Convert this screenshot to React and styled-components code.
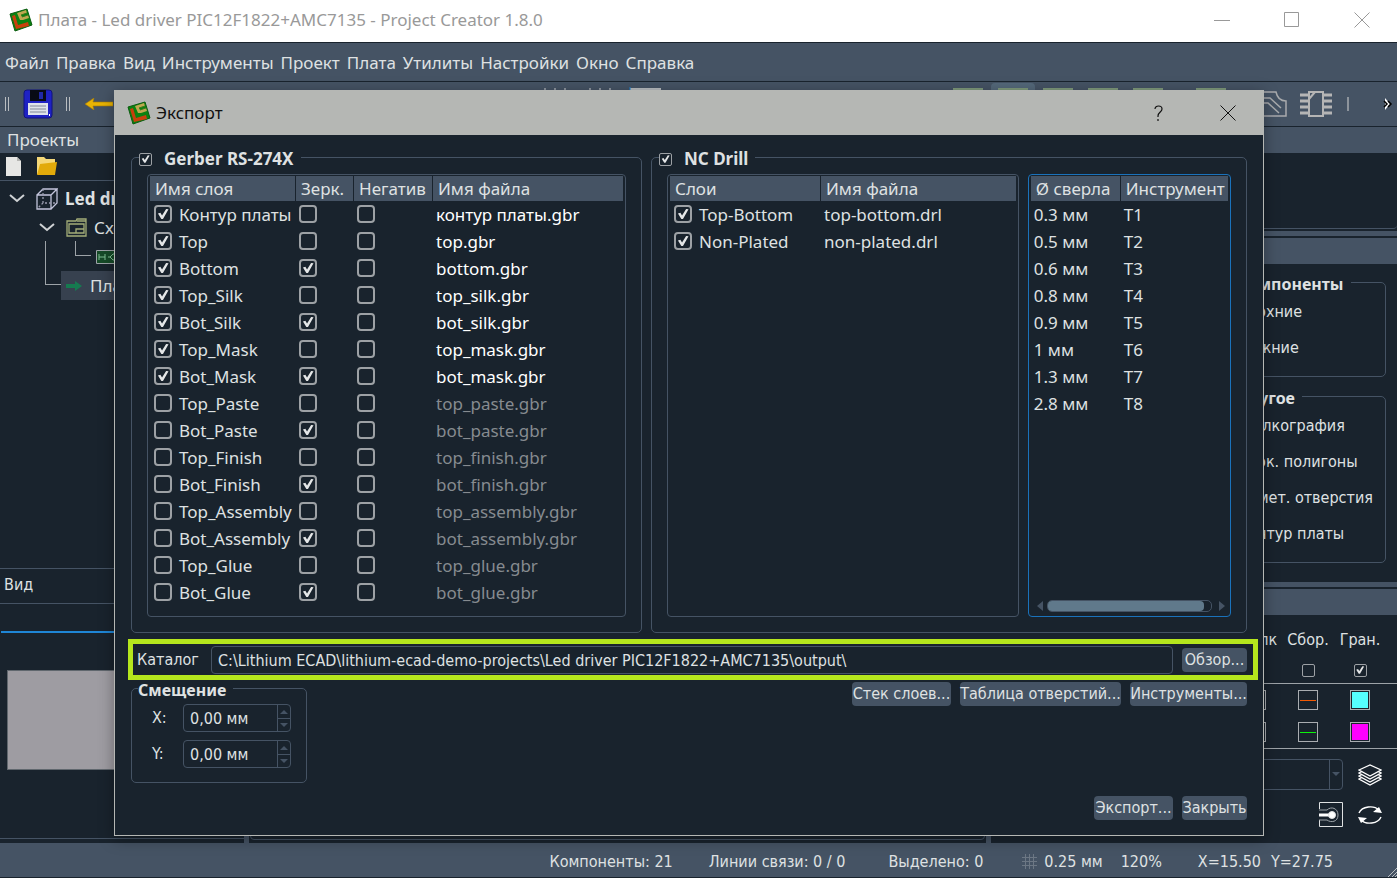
import React from 'react';
import styled, { createGlobalStyle, css } from 'styled-components';

const uiFont = "'Noto Sans', 'Open Sans', sans-serif";
const dialogFont = "'DejaVu Sans Condensed', 'DejaVu Sans', sans-serif";

const GlobalStyle = createGlobalStyle`
  * {
    box-sizing: border-box;
  }
  body {
    margin: 0;
    background: #19232d;
    color: #dfe1e2;
    font: 17px/24px ${uiFont};
    overflow: hidden;
  }
  button, input, select {
    font: inherit;
    color: inherit;
    margin: 0;
  }
`;

const Window = styled.div`
  position: relative;
  display: flex;
  flex-direction: column;
  height: 100vh;
`;

const TitleBar = styled.header`
  display: flex;
  align-items: center;
  flex: none;
  height: 42px;
  padding: 0 0 2px 9px;
  background: #fff;
  color: #999;
`;

const Title = styled.h1`
  flex: 1;
  margin: 0 0 0 5px;
  font-size: 17px;
  font-weight: 400;
  white-space: nowrap;
`;

const CaptionButton = styled.button`
  display: grid;
  place-items: center;
  width: 70px;
  height: 100%;
  padding: 0;
  border: 0;
  background: none;
`;

const MenuBar = styled.nav`
  display: flex;
  align-items: center;
  flex: none;
  height: 40px;
  padding: 1px 0 0 2px;
  background: #455364;
  border-top: 1px solid #19232d;
  border-bottom: 1px solid #19232d;
`;

const MenuItem = styled.button`
  padding: 0 4px 0 3px;
  border: 0;
  background: none;
  white-space: nowrap;
`;

const ToolBar = styled.div`
  display: flex;
  align-items: center;
  gap: 1px;
  flex: none;
  height: 45px;
  padding-left: 5px;
  background: #455364;
  border-bottom: 1px solid #19232d;
`;

const Handle = styled.span`
  width: 4px;
  height: 14px;
  border: solid #b9bdc1;
  border-width: 0 1px;
`;

const ToolButton = styled.button`
  display: grid;
  place-items: center;
  flex: none;
  width: ${(p) => (p.$wide ? '55px' : '44px')};
  height: 43px;
  padding: 0;
  border: 0;
  border-radius: 4px;
  background: ${(p) => (p.$active ? '#54687a' : 'none')};
`;

const ToolGroup = styled.div`
  display: flex;
  align-items: center;
  gap: 1px;
  margin-left: ${(p) => p.$offset};
`;

const ToolSpace = styled.span`
  display: grid;
  place-items: center;
  width: ${(p) => (p.$narrow ? '14px' : '17px')};
  &::after {
    content: '';
    width: 2px;
    height: 14px;
    background: #8d949c;
  }
`;

const MoreButton = styled.button`
  width: 18px;
  margin-left: 22px;
  padding: 0;
  border: 0;
  background: none;
`;

const Workspace = styled.div`
  display: flex;
  flex: 1;
  min-height: 0;
`;

const Splitter = styled.div`
  flex: none;
  width: 5px;
  background: #455364;
`;

const LeftDock = styled.aside`
  display: flex;
  flex-direction: column;
  flex: none;
  width: 244px;
  padding-bottom: 4px;
`;

const Canvas = styled.main`
  flex: 1;
  margin: 0 1px 3px;
  border: 1px solid #455364;
  border-radius: 4px;
`;

const RightDock = styled.aside`
  display: flex;
  flex-direction: column;
  flex: none;
  width: 406px;
`;

const DockTitle = styled.div`
  flex: none;
  height: 26px;
  padding-left: 7px;
  background: #455364;
  line-height: 26px;
`;

const DockTools = styled.div`
  display: flex;
  align-items: center;
  gap: 15px;
  flex: none;
  height: 28px;
  padding-left: 6px;
  border-bottom: 1px solid #455364;
`;

const FlatButton = styled.button`
  display: grid;
  place-items: center;
  padding: 0;
  border: 0;
  background: none;
`;

const Tree = styled.ul`
  flex: 1;
  margin: 0;
  padding: 3px 0 0;
  list-style: none;
  border-bottom: 1px solid #455364;
`;

const TreeRow = styled.li`
  display: flex;
  align-items: center;
  gap: 7px;
  height: 29px;
  margin-left: ${(p) => p.$indent}px;
  padding-left: ${(p) => (p.$selected ? '5px' : '0')};
  font-weight: ${(p) => (p.$top ? 700 : 400)};
  background: ${(p) => (p.$selected ? '#37414f' : 'none')};
  white-space: nowrap;
`;

const Branch = styled.span`
  position: absolute;
  left: ${(p) => p.$x}px;
  top: 241px;
  width: 16px;
  height: ${(p) => p.$length}px;
  border: solid #9da3a8;
  border-width: 0 0 1px 1px;
`;

const ViewTitle = styled.div`
  height: 35px;
  padding-left: 4px;
  font: 16px/32px ${dialogFont};
  border-bottom: 1px solid #455364;
`;

const ViewPane = styled.div`
  height: 235px;
  padding: 27px 0 0 1px;
  border-bottom: 1px solid #455364;
`;

const ViewTab = styled.div`
  height: 39px;
  border-top: 2px solid #1f86d6;
`;

const Preview = styled.div`
  height: 100px;
  margin: 0 6px;
  background: #9e9ca2;
  border: 1px solid #60676e;
`;

const EmptyPane = styled.div`
  flex: none;
  height: 76px;
  border-bottom: 1px solid #455364;
  border-radius: 0 0 4px 4px;
`;

const DockSplit = styled.div`
  flex: none;
  height: 9px;
  border: solid #19232d;
  border-width: 2px 0;
  background: #455364;
`;

const Filters = styled.div`
  display: flex;
  flex-direction: column;
  align-items: flex-end;
  gap: 6px;
  height: 316px;
  padding: 5px 11px 0;
  font: 16px/20px ${dialogFont};
`;

const Group = styled.fieldset`
  min-width: 0;
  margin: 0;
  border: 1px solid #455364;
  border-radius: 5px;
`;

const FilterGroup = styled(Group)`
  width: 156px;
  padding: 6px 14px 1px 7px;
`;

const Legend = styled.legend`
  margin-left: -${(p) => p.$pull || 0}px;
  padding: 4px 7px 0 0;
  font: bold ${(p) => (p.$large ? '17px' : '16px')}/22px ${uiFont};
  white-space: nowrap;
  label {
    display: flex;
    align-items: center;
    gap: 12px;
  }
`;

const FilterLabel = styled.div`
  height: 36px;
  line-height: 22px;
  white-space: nowrap;
  &:last-child {
    height: 38px;
  }
`;

const LayerTable = styled.table`
  margin-left: auto;
  margin-right: 11px;
  border-spacing: 0;
  table-layout: fixed;
  width: 156px;
  font: 16px/20px ${dialogFont};
  text-align: center;
  th {
    padding: 8px 0 0;
    height: 41px;
    font-weight: 400;
    white-space: nowrap;
  }
  td {
    height: ${(p) => (p.$compact ? '27px' : '32px')};
    padding: 0;
  }
`;

const LayerRule = styled.div`
  flex: none;
  height: 1px;
  background: #9da3a8;
`;

const Swatch = styled.button`
  display: inline-grid;
  place-items: center;
  width: 20px;
  height: 20px;
  padding: 0;
  border: 1px solid #a9adb1;
  background: #19232d;
  vertical-align: middle;
  &::after {
    content: '';
    width: 16px;
    height: ${(p) => (p.$line ? '1px' : '16px')};
    background: ${(p) => p.$color};
  }
`;

const LayerTools = styled.div`
  display: grid;
  grid-template-columns: 1fr 24px;
  align-items: center;
  justify-items: center;
  column-gap: 15px;
  row-gap: 12px;
  padding: 10px 15px 0;
  > :nth-child(odd) {
    justify-self: end;
  }
  select {
    width: 130px;
    height: 31px;
    border: 1px solid #455364;
    border-radius: 4px;
    background: #19232d;
    appearance: none;
  }
`;

const SelectWrap = styled.div`
  position: relative;
  &::after {
    content: '';
    position: absolute;
    right: 3px;
    top: 13px;
    border: solid transparent;
    border-width: 4px 4px 0;
    border-top-color: #455364;
  }
  &::before {
    content: '';
    position: absolute;
    right: 13px;
    top: 0;
    height: 31px;
    border-left: 1px solid #455364;
  }
`;

const StatusBar = styled.footer`
  position: relative;
  display: flex;
  align-items: center;
  justify-content: flex-end;
  flex: none;
  height: 35px;
  padding: 3px 64px 0 0;
  background: #455364;
  border-bottom: 1px solid #19232d;
  font: 16px/20px ${dialogFont};
  white-space: nowrap;
  svg.grip {
    position: absolute;
    right: 0;
    bottom: 0;
  }
`;

const Status = styled.span`
  display: flex;
  align-items: center;
  gap: 7px;
  margin-left: ${(p) => p.$gap}px;
`;

const Dialog = styled.section`
  position: absolute;
  inset: 90px 133px 42px 114px;
  display: flex;
  flex-direction: column;
  background: #19232d;
  border: 1px solid #b5b7b4;
  box-shadow: 0 3px 14px rgba(0, 0, 0, 0.35);
`;

const DialogBar = styled.header`
  display: flex;
  align-items: center;
  flex: none;
  height: 44px;
  padding-left: 12px;
  background: #b5b7b4;
  color: #111;
  h2 {
    flex: 1;
    margin: 0 0 0 5px;
    font-size: 17px;
    font-weight: 400;
  }
`;

const DialogBody = styled.form`
  display: flex;
  flex-direction: column;
  flex: 1;
  min-height: 0;
  padding: 9px 16px 15px;
  font: 16px/22px ${dialogFont};
`;

const Groups = styled.div`
  display: grid;
  grid-template-columns: minmax(0, 511fr) minmax(0, 596fr);
  gap: 9px;
  flex: 1;
  min-height: 0;
`;

const TableGroup = styled(Group)`
  display: flex;
  gap: 9px;
  padding: 4px 15px 15px;
`;

const Frame = styled.div`
  display: flex;
  flex-direction: column;
  justify-content: space-between;
  flex: ${(p) => p.$grow || 1} 1 0;
  min-width: 0;
  padding: 1px 2px;
  border: 1px solid ${(p) => (p.$focus ? '#1a72bb' : '#455364')};
  border-radius: 4px;
`;

const Check = styled.input.attrs({ type: 'checkbox' })`
  appearance: none;
  display: inline-grid;
  place-items: center;
  flex: none;
  width: 18px;
  height: 18px;
  border: 2px solid #9da1a5;
  border-radius: 4px;
  vertical-align: middle;
  ${(p) =>
    p.$small &&
    css`
      width: 13px;
      height: 13px;
      border-width: 1px;
      border-radius: 2px;
    `}
  &:checked::after {
    content: '';
    width: ${(p) => (p.$small ? '9px' : '12px')};
    height: ${(p) => (p.$small ? '9px' : '12px')};
    background: #e4e6e7;
    clip-path: polygon(8% 46%, 28% 40%, 42% 62%, 76% 8%, 96% 10%, 50% 92%, 36% 92%);
  }
`;

const Table = styled.table`
  width: 100%;
  border-spacing: 0;
  table-layout: fixed;
  font: 17px/24px ${uiFont};
  th {
    height: 26px;
    padding: 0 0 0 5px;
    text-align: left;
    font-weight: 400;
    background: #455364;
    border-right: 1px solid #19232d;
    border-bottom: 1px solid #19232d;
    white-space: nowrap;
  }
  th:last-child {
    border-right: 0;
  }
  td {
    height: 27px;
    padding: 0 0 1px 3px;
    white-space: nowrap;
  }
  td > ${Check} {
    margin-top: 2px;
    vertical-align: top;
  }
  label {
    display: flex;
    align-items: center;
    gap: 7px;
    padding-left: 1px;
  }
  label > ${Check} {
    margin-bottom: 2px;
  }
`;

const FileCell = styled.td`
  color: ${(p) => (p.$off ? '#868b90' : p.$bright ? '#fff' : '#dfe1e2')};
`;

const ScrollBar = styled.div`
  display: flex;
  align-items: center;
  gap: 4px;
  padding: 0 3px 3px 6px;
`;

const ScrollArrow = styled.span`
  border: solid transparent;
  border-width: 5px 0;
  ${(p) =>
    p.$left
      ? 'border-right: 6px solid #455364;'
      : 'border-left: 6px solid #455364; margin-left: 3px;'}
`;

const Track = styled.div`
  flex: 1;
  height: 12px;
  padding-right: 7px;
  border: 1px solid #455364;
  border-radius: 5px;
  &::after {
    content: '';
    display: block;
    height: 10px;
    border-radius: 4px;
    background: #60798b;
  }
`;

const PathRow = styled.div`
  display: flex;
  align-items: center;
  gap: 9px;
  height: 41px;
  margin: 6px -11px 0 -3px;
  padding: 0 6px 0 4px;
  border: 5px solid #b5e61d;
  label {
    width: 65px;
  }
`;

const PathInput = styled.input`
  flex: 1;
  min-width: 0;
  height: 28px;
  padding: 1px 6px 0;
  border: 1px solid #455364;
  border-radius: 4px;
  background: none;
`;

const Button = styled.button`
  height: 24px;
  padding: 0;
  border: 0;
  border-radius: 4px;
  background: #455364;
  line-height: 24px;
  min-width: ${(p) => p.$min || 65}px;
  white-space: nowrap;
`;

const LowerRow = styled.div`
  display: flex;
  align-items: flex-start;
  justify-content: space-between;
  margin-top: -5px;
`;

const Actions = styled.div`
  display: flex;
  justify-content: flex-end;
  gap: 9px;
  margin-top: ${(p) => p.$top}px;
`;

const OffsetGroup = styled(Group)`
  display: grid;
  grid-template-columns: 31px 108px;
  gap: 8px 0;
  align-items: center;
  padding: 3px 15px 14px 20px;
`;

const Spin = styled.div`
  display: grid;
  grid-template-columns: 1fr 13px;
  grid-template-rows: 13px 13px;
  border: 1px solid #455364;
  border-radius: 4px;
  input {
    grid-row: 1 / 3;
    min-width: 0;
    padding: 1px 6px 0;
    border: 0;
    background: none;
  }
  button {
    display: grid;
    place-items: center;
    padding: 0;
    border: 0;
    border-left: 1px solid #455364;
    background: none;
  }
  button:last-child {
    border-top: 1px solid #455364;
  }
`;

const layers = [
  ['Контур платы', true, false],
  ['Top', true, false],
  ['Bottom', true, true],
  ['Top_Silk', true, false],
  ['Bot_Silk', true, true],
  ['Top_Mask', true, false],
  ['Bot_Mask', true, true],
  ['Top_Paste', false, false],
  ['Bot_Paste', false, true],
  ['Top_Finish', false, false],
  ['Bot_Finish', false, true],
  ['Top_Assembly', false, false],
  ['Bot_Assembly', false, true],
  ['Top_Glue', false, false],
  ['Bot_Glue', false, true],
];

const drills = ['0.3', '0.5', '0.6', '0.8', '0.9', '1', '1.3', '2.8'];

const menu = [
  'Файл', 'Правка', 'Вид', 'Инструменты', 'Проект', 'Плата',
  'Утилиты', 'Настройки', 'Окно', 'Справка',
];

const Logo = () => (
  <svg width='24' height='24' viewBox='0 0 24 24' aria-hidden='true'>
    <path d='M1 6 18 1l5 16L6 23z' fill='#0a8210' stroke='#0a5c0e' strokeLinejoin='round' />
    <path d='m3 8 3-1 3 10 10-3 1 4-13 3z' fill='#c8400c' />
    <path d='M8 5l9-3 1 3-6 2 1 2 6-2 1 3-6 2h-3z' fill='#c0a850' />
    <path d='m12 7 6-2m-5 4 6-2' stroke='#3d7a1c' />
  </svg>
);

const CloseIcon = () => (
  <svg width='16' height='16' viewBox='0 0 16 16' aria-hidden='true'>
    <path d='m.5.5 15 15m0-15-15 15' stroke='currentColor' fill='none' />
  </svg>
);

const SaveIcon = () => (
  <svg width='30' height='30' viewBox='0 0 30 30' aria-hidden='true'>
    <rect x='1' y='1' width='28' height='28' rx='3' fill='#1f22c4' stroke='#11137c' />
    <path d='M7 1h16v11H7z' fill='#080b16' />
    <path d='M16 3h4v7h-4z' fill='#2029a8' />
    <path d='M5 14h20v12H5z' fill='#dfe3ea' />
    <path d='M7 17h16M7 20h16M7 23h16' stroke='#808798' />
    <path d='M26 25h1v2h-1z' fill='#fff' />
  </svg>
);

const BackIcon = () => (
  <svg width='28' height='12' viewBox='0 0 28 12' aria-hidden='true'>
    <path d='M0 6 9 0l-1 4h20v4H8l1 4z' fill='#e9b404' stroke='#a87b06' strokeWidth='.6' />
  </svg>
);

const LayerToolIcon = () => (
  <svg width='30' height='32' viewBox='0 0 30 32' aria-hidden='true'>
    <path d='M1 1h28v30H1z' fill='none' stroke='#7f9a7c' strokeWidth='2' />
  </svg>
);

const TicksIcon = () => (
  <svg width='30' height='32' viewBox='0 0 30 32' aria-hidden='true'>
    <path d='M5 0v31M15 0v31M25 0v31' stroke='#a5abb1' strokeWidth='1.5' />
  </svg>
);

const SheetToolIcon = () => (
  <svg width='32' height='34' viewBox='0 0 32 34' fill='none' aria-hidden='true'>
    <path d='M2 2h29v31H2z' stroke='#b9bdc1' strokeWidth='2' />
    <path d='M1 0v34' stroke='#1f86d6' />
  </svg>
);

const CopperIcon = () => (
  <svg width='32' height='26' viewBox='0 0 32 26' fill='none' stroke='#a9abad' strokeWidth='1.5' aria-hidden='true'>
    <path d='M1 1h20c1 5 4 9 10 9v15H1z' />
    <path d='M1 7h14l11 10M1 12h12l11 10' />
  </svg>
);

const ChipIcon = () => (
  <svg width='32' height='26' viewBox='0 0 32 26' fill='none' stroke='#b5b5b5' aria-hidden='true'>
    <path d='M9 1h14v24H9zM9 8l6-7' strokeWidth='2' />
    <path d='M0 4h8M0 10h8M0 16h8M0 22h8M24 4h8M24 10h8M24 16h8M24 22h8' strokeWidth='3' />
  </svg>
);

const Chevron = styled((props) => (
  <svg width='16' height='10' viewBox='0 0 16 10' aria-hidden='true' {...props}>
    <path d='m1 1 7 6 7-6' fill='none' stroke='#cfd2d4' strokeWidth='2' />
  </svg>
))`
  margin-right: 4px;
`;

const CubeIcon = () => (
  <svg width='22' height='22' viewBox='0 0 22 22' fill='none' stroke='#c3c5dc' strokeWidth='1.3' aria-hidden='true'>
    <path d='M1 7h14v14H1zM1 7l6-6h14l-6 6m6-6v14l-6 6' />
    <path d='M7 1v14h14M7 15l-6 6' strokeDasharray='2 2' stroke='#9a9cae' />
  </svg>
);

const SchemeIcon = () => (
  <svg width='21' height='19' viewBox='0 0 21 19' fill='none' stroke='#a3ad78' strokeWidth='1.3' aria-hidden='true'>
    <path d='M1 3h9l1-2h9v17H1z' />
    <path d='M3 6h15v9H3zM10 15v-4h8M11 3h9' />
  </svg>
);

const SheetIcon = () => (
  <svg width='24' height='14' viewBox='0 0 24 14' aria-hidden='true'>
    <path d='M.5.5h23v13H.5z' fill='#164a28' stroke='#9da3a8' />
    <path d='M3 4v6m0-3h6m0-3v6m3-3h2l3-3h5m-8 3 3 3h5' fill='none' stroke='#7fbf93' />
  </svg>
);

const Spinner = ({ id, label, value }) => (
  <>
    <label htmlFor={id}>{label}</label>
    <Spin>
      <input id={id} defaultValue={value} />
      <button type='button' aria-label='Увеличить'>
        <svg width='8' height='4'><path d='m0 4 4-4 4 4z' fill='#455364' /></svg>
      </button>
      <button type='button' aria-label='Уменьшить'>
        <svg width='8' height='4'><path d='m0 0 4 4 4-4z' fill='#455364' /></svg>
      </button>
    </Spin>
  </>
);

const ExportDialog = () => (
  <Dialog role='dialog' aria-label='Экспорт'>
    <DialogBar>
      <Logo />
      <h2>Экспорт</h2>
      <CaptionButton aria-label='Справка'>
        <svg width='9' height='16' viewBox='0 0 9 16' fill='none' stroke='currentColor' strokeWidth='1.2'>
          <path d='M1 4c0-4 7-4 7 0 0 3-4 3-4 7v1m0 2v2' />
        </svg>
      </CaptionButton>
      <CaptionButton aria-label='Закрыть'>
        <CloseIcon />
      </CaptionButton>
    </DialogBar>
    <DialogBody onSubmit={(e) => e.preventDefault()}>
      <Groups>
        <TableGroup>
          <Legend $large $pull={8}>
            <label>
              <Check $small defaultChecked />
              Gerber RS-274X
            </label>
          </Legend>
          <Frame>
            <Table>
              <colgroup>
                <col width='146' />
                <col width='58' />
                <col width='79' />
                <col />
              </colgroup>
              <thead>
                <tr>
                  <th>Имя слоя</th>
                  <th>Зерк.</th>
                  <th>Негатив</th>
                  <th>Имя файла</th>
                </tr>
              </thead>
              <tbody>
                {layers.map(([name, on, mirror]) => (
                  <tr key={name}>
                    <td>
                      <label>
                        <Check defaultChecked={on} />
                        {name}
                      </label>
                    </td>
                    <td>
                      <Check defaultChecked={mirror} aria-label={`Зерк. ${name}`} />
                    </td>
                    <td>
                      <Check aria-label={`Негатив ${name}`} />
                    </td>
                    <FileCell $off={!on} $bright>
                      {name.toLowerCase()}.gbr
                    </FileCell>
                  </tr>
                ))}
              </tbody>
            </Table>
          </Frame>
        </TableGroup>
        <TableGroup>
          <Legend $large $pull={8}>
            <label>
              <Check $small defaultChecked />
              NC Drill
            </label>
          </Legend>
          <Frame $grow={354}>
            <Table>
              <colgroup>
                <col width='151' />
                <col />
              </colgroup>
              <thead>
                <tr>
                  <th>Слои</th>
                  <th>Имя файла</th>
                </tr>
              </thead>
              <tbody>
                {['Top-Bottom', 'Non-Plated'].map((name) => (
                  <tr key={name}>
                    <td>
                      <label>
                        <Check defaultChecked />
                        {name}
                      </label>
                    </td>
                    <FileCell>{name.toLowerCase()}.drl</FileCell>
                  </tr>
                ))}
              </tbody>
            </Table>
          </Frame>
          <Frame $grow={202} $focus>
            <Table>
              <colgroup>
                <col width='90' />
                <col />
              </colgroup>
              <thead>
                <tr>
                  <th>Ø сверла</th>
                  <th>Инструмент</th>
                </tr>
              </thead>
              <tbody>
                {drills.map((size, i) => (
                  <tr key={size}>
                    <td>{size} мм</td>
                    <td>T{i + 1}</td>
                  </tr>
                ))}
              </tbody>
            </Table>
            <ScrollBar>
              <ScrollArrow $left />
              <Track />
              <ScrollArrow />
            </ScrollBar>
          </Frame>
        </TableGroup>
      </Groups>
      <PathRow>
        <label htmlFor='path'>Каталог</label>
        <PathInput
          id='path'
          defaultValue='C:\Lithium ECAD\lithium-ecad-demo-projects\Led driver PIC12F1822+AMC7135\output\'
        />
        <Button type='button'>Обзор...</Button>
      </PathRow>
      <LowerRow>
        <OffsetGroup>
          <Legend $pull={14}>Смещение</Legend>
          <Spinner id='offset-x' label='X:' value='0,00 мм' />
          <Spinner id='offset-y' label='Y:' value='0,00 мм' />
        </OffsetGroup>
        <Actions $top={7}>
          <Button type='button' $min={99}>Стек слоев...</Button>
          <Button type='button' $min={161}>Таблица отверстий...</Button>
          <Button type='button' $min={117}>Инструменты...</Button>
        </Actions>
      </LowerRow>
      <Actions $top={13}>
        <Button $min={79}>Экспорт...</Button>
        <Button type='button'>Закрыть</Button>
      </Actions>
    </DialogBody>
  </Dialog>
);

const App = () => {
  return (
    <Window>
      <GlobalStyle />
      <TitleBar>
        <Logo />
        <Title>Плата - Led driver PIC12F1822+AMC7135 - Project Creator 1.8.0</Title>
        <CaptionButton aria-label='Свернуть'>
          <svg width='16' height='16'><path d='M0 8.5h16' stroke='#999' /></svg>
        </CaptionButton>
        <CaptionButton aria-label='Развернуть'>
          <svg width='16' height='16'><path d='M.5.5h14v14H.5z' stroke='#999' fill='none' /></svg>
        </CaptionButton>
        <CaptionButton aria-label='Закрыть окно'>
          <CloseIcon />
        </CaptionButton>
      </TitleBar>
      <MenuBar>
        {menu.map((item) => (
          <MenuItem key={item}>{item}</MenuItem>
        ))}
      </MenuBar>
      <ToolBar>
        <Handle />
        <ToolButton $wide aria-label='Сохранить'><SaveIcon /></ToolButton>
        <Handle />
        <ToolButton $wide aria-label='Назад'><BackIcon /></ToolButton>
        <ToolGroup $offset='406px'>
          <ToolButton aria-label='Сетка'><TicksIcon /></ToolButton>
          <ToolButton aria-label='Шаг сетки'><TicksIcon /></ToolButton>
          <ToolButton aria-label='Лист'><SheetToolIcon /></ToolButton>
        </ToolGroup>
        <ToolGroup $offset='auto'>
          <ToolButton aria-label='Слой 1'><LayerToolIcon /></ToolButton>
          <ToolButton $active aria-label='Слой 2'><LayerToolIcon /></ToolButton>
          <ToolButton aria-label='Слой 3'><LayerToolIcon /></ToolButton>
          <ToolButton aria-label='Слой 4'><LayerToolIcon /></ToolButton>
          <ToolButton aria-label='Слой 5'><LayerToolIcon /></ToolButton>
          <ToolSpace />
          <ToolButton aria-label='Слой 6'><LayerToolIcon /></ToolButton>
          <ToolSpace $narrow />
          <ToolButton aria-label='Полигон'><CopperIcon /></ToolButton>
          <ToolButton aria-label='Компонент'><ChipIcon /></ToolButton>
          <ToolSpace />
          <MoreButton aria-label='Ещё'>
            <svg width='10' height='12' viewBox='0 0 10 12' fill='none'>
              <path d='M2 0v12l5-6z' fill='#fff' />
              <path d='m1 3 3 3-3 3m4-6 3 3-3 3' stroke='#000' strokeWidth='1.5' />
            </svg>
          </MoreButton>
        </ToolGroup>
      </ToolBar>
      <Workspace>
        <LeftDock>
          <DockTitle>Проекты</DockTitle>
          <DockTools>
            <FlatButton aria-label='Новый'>
              <svg width='16' height='19' viewBox='0 0 16 19'>
                <path d='M0 0h11l4 4v15H0z' fill='#e6e6e4' />
                <path d='m11 0 4 4h-4z' fill='#b5b5b2' />
              </svg>
            </FlatButton>
            <FlatButton aria-label='Открыть'>
              <svg width='20' height='19' viewBox='0 0 20 19'>
                <path d='M0 0h7l2 2h9v15H0z' fill='#f5d878' />
                <path d='M3 7 20 5l-2 13H0z' fill='#e2aa0a' />
              </svg>
            </FlatButton>
          </DockTools>
          <Tree>
            <TreeRow $top $indent={9}>
              <Chevron />
              <CubeIcon />
              Led driver
            </TreeRow>
            <TreeRow $indent={39}>
              <Chevron />
              <SchemeIcon />
              Схема
            </TreeRow>
            <TreeRow $indent={96}>
              <SheetIcon />
              Лист 1
            </TreeRow>
            <TreeRow $selected $indent={61}>
              <svg width='17' height='12' viewBox='0 0 17 12' aria-hidden='true'>
                <path d='M0 4h9V1l7 5-7 5V8H0z' fill='#167a50' />
              </svg>
              Плата
            </TreeRow>
          </Tree>
          <Branch $x={45} $length={44} />
          <Branch $x={75} $length={15} />
          <ViewTitle>Вид</ViewTitle>
          <ViewPane>
            <ViewTab />
            <Preview />
          </ViewPane>
        </LeftDock>
        <Splitter />
        <Canvas />
        <Splitter />
        <RightDock>
          <DockTitle />
          <EmptyPane />
          <DockSplit />
          <DockTitle />
          <Filters>
            <FilterGroup>
              <Legend $pull={1}>Компоненты</Legend>
              <FilterLabel>Верхние</FilterLabel>
              <FilterLabel>Нижние</FilterLabel>
            </FilterGroup>
            <FilterGroup>
              <Legend $pull={1}>Другое</Legend>
              <FilterLabel>Шелкография</FilterLabel>
              <FilterLabel>Блок. полигоны</FilterLabel>
              <FilterLabel>Немет. отверстия</FilterLabel>
              <FilterLabel>Контур платы</FilterLabel>
            </FilterGroup>
          </Filters>
          <DockSplit />
          <DockTitle />
          <LayerTable $compact>
            <thead>
              <tr>
                <th>Шелк</th>
                <th>Сбор.</th>
                <th>Гран.</th>
              </tr>
            </thead>
            <tbody>
              <tr>
                <td><Check $small aria-label='Шелк' /></td>
                <td><Check $small aria-label='Сбор.' /></td>
                <td><Check $small defaultChecked aria-label='Гран.' /></td>
              </tr>
            </tbody>
          </LayerTable>
          <LayerRule />
          <LayerTable>
            <tbody>
              <tr>
                <td><Swatch $line $color='#dfe1e2' aria-label='Шелк верх' /></td>
                <td><Swatch $line $color='#f25a05' aria-label='Сбор. верх' /></td>
                <td><Swatch $color='#55ffff' aria-label='Гран. верх' /></td>
              </tr>
              <tr>
                <td><Swatch $line $color='#dfe1e2' aria-label='Шелк низ' /></td>
                <td><Swatch $line $color='#0cf20c' aria-label='Сбор. низ' /></td>
                <td><Swatch $color='#ff00ff' aria-label='Гран. низ' /></td>
              </tr>
            </tbody>
          </LayerTable>
          <LayerRule />
          <LayerTools>
            <SelectWrap>
              <select aria-label='Слой' />
            </SelectWrap>
            <FlatButton aria-label='Слои'>
              <svg width='24' height='22' viewBox='0 0 24 22' fill='#19232d' stroke='#fff' strokeWidth='1.3'>
                <path d='m1 15 11-6 11 6-11 6z' />
                <path d='m1 12 11-6 11 6-11 6z' />
                <path d='m1 9 11-6 11 6-11 6z' />
                <path d='m1 6 11-5 11 5-11 6z' />
              </svg>
            </FlatButton>
            <FlatButton aria-label='Площадка'>
              <svg width='24' height='25' viewBox='0 0 24 25' fill='none' stroke='#dfe1e2'>
                <path d='M.5 7V.5h23v24H.5V18' />
                <path d='M0 8h8c4-4 11-2 11 5s-7 8-11 5H0' stroke='#9da3a8' />
                <path d='M0 13h12' strokeWidth='3' stroke='#fff' />
                <circle cx='13' cy='13' r='3.5' fill='#fff' />
              </svg>
            </FlatButton>
            <FlatButton aria-label='Поменять'>
              <svg width='24' height='18' viewBox='0 0 24 18' fill='none' stroke='#fff' strokeWidth='1.4'>
                <path d='M1 7C4 0 16-1 21 4M23 11c-3 7-15 8-20 3' />
                <path d='m24 7-9-1 6-5zM0 11l9 1-6 5z' fill='#fff' stroke='none' />
              </svg>
            </FlatButton>
          </LayerTools>
        </RightDock>
      </Workspace>
      <StatusBar>
        <Status>Компоненты: 21</Status>
        <Status $gap={36}>Линии связи: 0 / 0</Status>
        <Status $gap={43}>Выделено: 0</Status>
        <Status $gap={39}>
          <svg width='15' height='15' viewBox='0 0 15 15' stroke='#6c7784' aria-hidden='true'>
            <path d='M3.5 0v15M7.5 0v15M11.5 0v15M0 3.500h15M0 7.500h15M0 11.500h15' />
          </svg>
          0.25 мм
        </Status>
        <Status $gap={18}>120%</Status>
        <Status $gap={36}>X=15.50</Status>
        <Status $gap={10}>Y=27.75</Status>
        <svg className='grip' width='10' height='10' stroke='#b9bdc1' aria-hidden='true'>
          <path d='m1 10 9-9M5 10l5-5M8 10l2-2' />
        </svg>
      </StatusBar>
      <ExportDialog />
    </Window>
  );
};

export default App;
